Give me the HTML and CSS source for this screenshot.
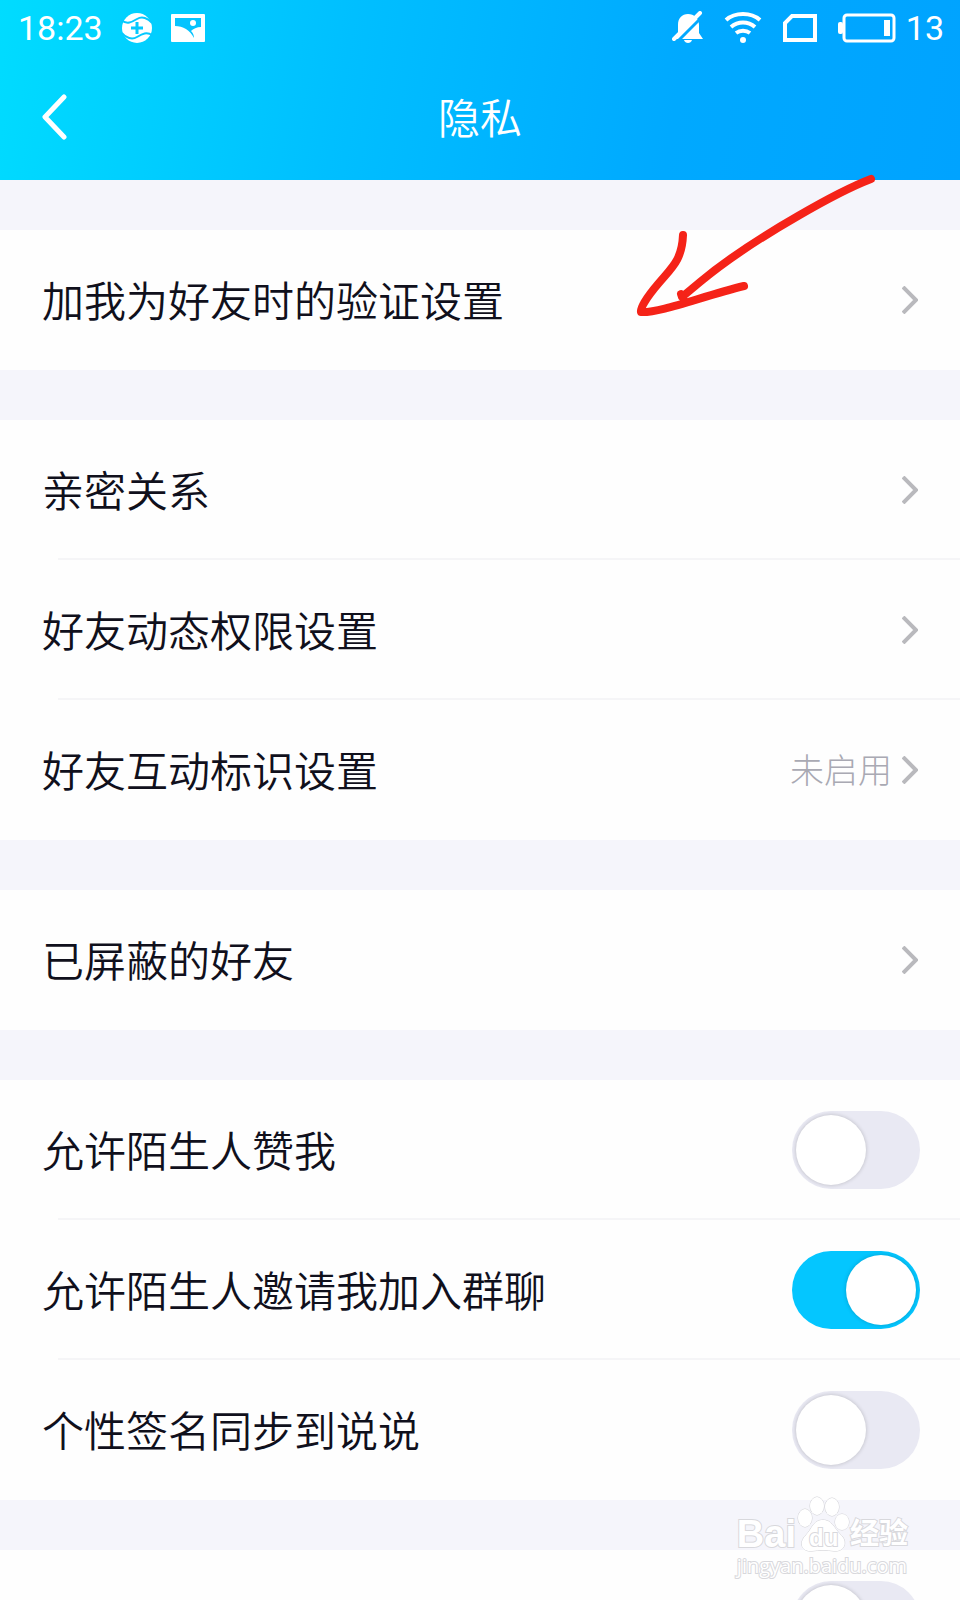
FILE: index.html
```html
<!DOCTYPE html>
<html lang="zh-CN">
<head>
    <meta charset="UTF-8">
    <meta name="viewport" content="width=device-width, initial-scale=1.0">
    <title>隐私</title>
    <link rel="stylesheet" href="styles.css">
</head>
<body>
  <header class="header">
    <div class="status-bar">
      <span class="clock">18:23</span>
      <svg class="icon-guard" width="32" height="32" viewBox="0 0 32 32">
        <circle cx="16" cy="16" r="15" fill="#fff"/>
        <path d="M0 8C6 13 11 10 16 7C21 4 27 6 31 11" fill="none" stroke="#05c9ff" stroke-width="2"/>
        <path d="M1 21C5 26 11 28 16 25C21 22 26 19 32 24" fill="none" stroke="#05c9ff" stroke-width="2"/>
        <path d="M16 10V22M10 16H22" stroke="#05c9ff" stroke-width="3"/>
      </svg>
      <svg class="icon-photo" width="34" height="28" viewBox="0 0 34 28">
        <rect x="0" y="0" width="34" height="28" rx="1" fill="#fff"/>
        <path d="M4 4H30V13C26 13 22 15 20 17C22 19 23 21 23 24C19 16 12 12 4 12Z" fill="#05c4ff"/>
        <circle cx="22" cy="9" r="3" fill="#fff"/>
      </svg>
      <div class="status-right">
        <svg width="32" height="34" viewBox="0 0 32 34">
          <path d="M6 22V14C6 7 10 3 16 3C22 3 27 7 27 14V22L31 28H2Z" fill="#fff"/>
          <path d="M12 29H20C19 33 13 33 12 29Z" fill="#fff"/>
          <path d="M5 31L32 4" stroke="#03a9ff" stroke-width="3"/>
          <path d="M2 28L28 2" stroke="#fff" stroke-width="4" stroke-linecap="round"/>
        </svg>
        <svg width="38" height="34" viewBox="0 0 38 34" fill="none" stroke="#fff" stroke-width="4">
          <path d="M2 9C11 1 27 1 36 9"/>
          <path d="M7 16C14 10 24 10 31 16"/>
          <path d="M12 22C16 19 22 19 26 22"/>
          <circle cx="19" cy="29" r="3" fill="#fff" stroke="none"/>
        </svg>
        <svg width="36" height="28" viewBox="0 0 36 28" fill="none" stroke="#fff" stroke-width="4">
          <path d="M10 2H33V26H3V9Z"/>
        </svg>
        <svg width="58" height="30" viewBox="0 0 58 30">
          <rect x="6" y="2" width="50" height="26" rx="3" fill="none" stroke="#fff" stroke-width="3"/>
          <rect x="0" y="9" width="5" height="12" rx="2" fill="#fff"/>
          <rect x="46" y="7" width="6" height="16" fill="#fff"/>
        </svg>
        <span>13</span>
      </div>
    </div>
    <div class="nav">
      <button class="back" aria-label="返回">
        <svg width="28" height="46" viewBox="0 0 28 46"><path d="M24 3L5 23L24 43" fill="none" stroke="#fff" stroke-width="5" stroke-linecap="round" stroke-linejoin="round"/></svg>
      </button>
      <h1 class="title">隐私</h1>
    </div>
  </header>

  <main class="settings">
    <section class="group">
      <a class="row" href="#"><span class="label">加我为好友时的验证设置</span><svg class="chevron" viewBox="0 0 16 28"><path d="M1 1L14 14L1 27"/></svg></a>
    </section>
    <section class="group">
      <a class="row" href="#"><span class="label">亲密关系</span><svg class="chevron" viewBox="0 0 16 28"><path d="M1 1L14 14L1 27"/></svg></a>
      <a class="row" href="#"><span class="label">好友动态权限设置</span><svg class="chevron" viewBox="0 0 16 28"><path d="M1 1L14 14L1 27"/></svg></a>
      <a class="row" href="#"><span class="label">好友互动标识设置</span><span class="value">未启用</span><svg class="chevron" viewBox="0 0 16 28"><path d="M1 1L14 14L1 27"/></svg></a>
    </section>
    <section class="group">
      <a class="row" href="#"><span class="label">已屏蔽的好友</span><svg class="chevron" viewBox="0 0 16 28"><path d="M1 1L14 14L1 27"/></svg></a>
    </section>
    <section class="group">
      <div class="row"><label class="label" for="like">允许陌生人赞我</label><input class="switch" type="checkbox" id="like"></div>
      <div class="row"><label class="label" for="invite">允许陌生人邀请我加入群聊</label><input class="switch" type="checkbox" id="invite" checked></div>
      <div class="row"><label class="label" for="sync">个性签名同步到说说</label><input class="switch" type="checkbox" id="sync"></div>
    </section>
    <section class="group">
      <div class="row"><input class="switch" type="checkbox" aria-label="更多设置"></div>
    </section>
  </main>

  <svg class="arrow" width="250" height="150" viewBox="0 0 250 150">
    <path d="M241 9C220 17 199 28 168 46C121 73 88 97 70 112L52 127L51 124M53 65C52 91 41 98 28 114C17 127 10 138 11 142C30 143 70 127 114 116"/>
  </svg>

  <div class="watermark">
    <div class="brand">
      <span>Bai</span>
      <span class="paw">
        <svg width="54" height="56" viewBox="0 0 54 56">
          <ellipse cx="9" cy="22" rx="7" ry="9"/>
          <ellipse cx="21" cy="10" rx="7" ry="9"/>
          <ellipse cx="36" cy="11" rx="7" ry="9"/>
          <ellipse cx="46" cy="26" rx="7" ry="8"/>
          <path d="M27 24C17 24 16 33 10 39C2 47 6 56 16 55C22 54 32 54 38 55C48 56 53 46 44 38C38 32 36 24 27 24Z"/>
        </svg>
        <span class="du">du</span>
      </span>
      <span class="cn">经验</span>
    </div>
    <div class="site">jingyan.baidu.com</div>
  </div>
</body>
</html>
```
FILE: styles.css
```css
* {
  box-sizing: border-box;
}
body {
  position: relative;
  display: flex;
  flex-direction: column;
  height: 100vh;
  margin: 0;
  overflow: hidden;
  background: #f5f5fb;
  color: #10101c;
  font-family: "Noto Sans CJK SC", sans-serif;
  font-size: 42px;
  font-weight: 350;
}
.header {
  flex: none;
  height: 180px;
  background: linear-gradient(100deg, #00dcff 0%, #00bfff 36%, #00a9ff 70%, #00a3ff 100%);
  color: #fff;
}
.status-bar {
  display: flex;
  align-items: center;
  height: 56px;
  padding: 0 16px 0 18px;
  font-family: Roboto, sans-serif;
  font-size: 34px;
  font-weight: 400;
}
.icon-guard,
.icon-photo {
  margin-left: 18px;
}
.status-right {
  display: flex;
  align-items: center;
  gap: 20px;
  margin-left: auto;
}
.status-right span {
  margin-left: -10px;
}
.nav {
  display: grid;
  grid-template-columns: 80px 1fr 80px;
  align-items: center;
  height: 122px;
}
.back {
  display: flex;
  justify-content: flex-end;
  padding: 0 12px 0 0;
  border: 0;
  background: none;
  cursor: pointer;
}
.title {
  margin: 0;
  padding-bottom: 4px;
  font-size: 42px;
  font-weight: 350;
  text-align: center;
}
.settings {
  flex: 1;
  overflow-y: auto;
  scrollbar-width: none;
}
.group {
  margin-top: 50px;
  background: #fefefe;
}
.row {
  display: flex;
  align-items: center;
  height: 140px;
  padding: 0 40px 0 42px;
  color: inherit;
  text-decoration: none;
}
/* divider starts a little to the right of the label */
.row:not(:last-child) {
  background: linear-gradient(#f5f5f7, #f5f5f7) 58px 100% / 100% 2px no-repeat;
}
.label,
.value {
  padding-bottom: 4px;
}
.value {
  margin-left: auto;
  color: #a9a9b3;
  font-size: 34px;
  font-weight: 300;
}
.chevron {
  width: 16px;
  height: 28px;
  margin-left: auto;
  margin-right: 2px;
  fill: none;
  stroke: #b9b9bd;
  stroke-width: 4;
}
.value + .chevron {
  margin-left: 10px;
}
.switch {
  appearance: none;
  display: flex;
  width: 128px;
  height: 78px;
  margin: 0 0 0 auto;
  padding: 4px;
  border-radius: 39px;
  background: #e9e9f3;
  cursor: pointer;
}
.switch::before {
  content: "";
  width: 70px;
  height: 70px;
  border-radius: 50%;
  background: #fff;
  box-shadow: 0 0 4px rgba(0, 0, 0, 0.2);
}
.switch:checked {
  justify-content: flex-end;
  background: #04c6ff;
}
.arrow {
  position: absolute;
  top: 170px;
  right: 80px;
  fill: none;
  stroke: #f52318;
  stroke-width: 8;
  stroke-linecap: round;
  stroke-linejoin: round;
  pointer-events: none;
}
.watermark {
  position: absolute;
  right: 52px;
  bottom: 20px;
  color: #fff;
  font-family: "Open Sans", "Noto Sans CJK SC", sans-serif;
  font-weight: 700;
  paint-order: stroke fill;
  -webkit-text-stroke: 2px #d8d8dc;
  pointer-events: none;
}
.brand {
  display: flex;
  align-items: flex-end;
  height: 56px;
  font-family: "Liberation Sans", "Noto Sans CJK SC", sans-serif;
  font-size: 38px;
  line-height: 36px;
}
.paw {
  position: relative;
  height: 56px;
}
.paw svg {
  display: block;
  fill: #fff;
  stroke: #d0d0d4;
  stroke-width: 1;
}
.du {
  position: absolute;
  left: 13px;
  bottom: 0;
  font-size: 24px;
  line-height: 28px;
}
.cn {
  font-size: 29px;
}
.site {
  font-size: 20px;
  font-weight: 400;
  line-height: 28px;
}
```
